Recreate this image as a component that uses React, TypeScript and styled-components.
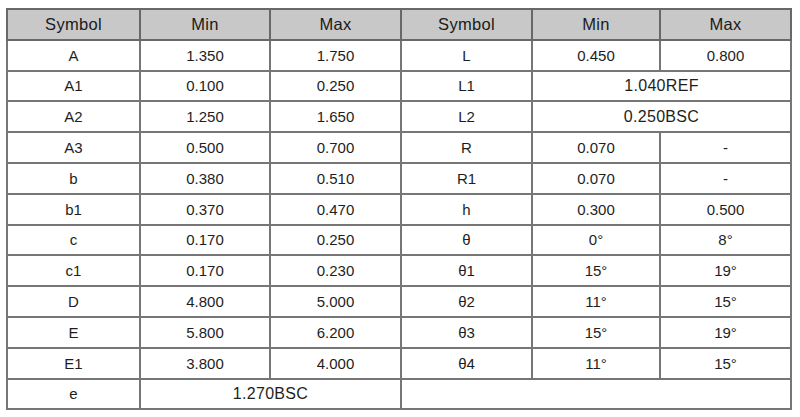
import React from "react";
import styled, { createGlobalStyle } from "styled-components";

const Global = createGlobalStyle`
  html, body { margin: 0; padding: 0; background: #ffffff; }
  body { font-family: "Liberation Sans", Arial, sans-serif; }
`;

const Page = styled.div`
  padding: 8px 10px 0 6px;
`;

const Table = styled.table`
  width: 784px;
  border-collapse: collapse;
  table-layout: fixed;
  font-family: "Liberation Sans", Arial, sans-serif;
  font-size: 15px;
  color: #1e1e1e;
  border: 2px solid #666;
`;

const Col = styled.col<{ $w: number }>`
  width: ${(p) => p.$w}px;
`;

const Row = styled.tr`
  height: 30.8px;
`;

const HeadCell = styled.th`
  background: #c8c8c8;
  font-weight: normal;
  font-size: 16.5px;
  letter-spacing: 0.3px;
  color: #1a1a1a;
  border: 2px solid #686868;
  text-align: center;
  padding: 0;
`;

const Cell = styled.td<{ $wide?: boolean }>`
  border: 2px solid #767676;
  text-align: center;
  padding: 0;
  background: #fff;
  font-size: ${(p) => (p.$wide ? "16px" : "15px")};
  letter-spacing: ${(p) => (p.$wide ? "0.3px" : "0")};
`;

type R = { t: string; span?: number }[];

const left: R[] = [
  [{ t: "A" }, { t: "1.350" }, { t: "1.750" }],
  [{ t: "A1" }, { t: "0.100" }, { t: "0.250" }],
  [{ t: "A2" }, { t: "1.250" }, { t: "1.650" }],
  [{ t: "A3" }, { t: "0.500" }, { t: "0.700" }],
  [{ t: "b" }, { t: "0.380" }, { t: "0.510" }],
  [{ t: "b1" }, { t: "0.370" }, { t: "0.470" }],
  [{ t: "c" }, { t: "0.170" }, { t: "0.250" }],
  [{ t: "c1" }, { t: "0.170" }, { t: "0.230" }],
  [{ t: "D" }, { t: "4.800" }, { t: "5.000" }],
  [{ t: "E" }, { t: "5.800" }, { t: "6.200" }],
  [{ t: "E1" }, { t: "3.800" }, { t: "4.000" }],
  [{ t: "e" }, { t: "1.270BSC", span: 2 }],
];

const right: R[] = [
  [{ t: "L" }, { t: "0.450" }, { t: "0.800" }],
  [{ t: "L1" }, { t: "1.040REF", span: 2 }],
  [{ t: "L2" }, { t: "0.250BSC", span: 2 }],
  [{ t: "R" }, { t: "0.070" }, { t: "-" }],
  [{ t: "R1" }, { t: "0.070" }, { t: "-" }],
  [{ t: "h" }, { t: "0.300" }, { t: "0.500" }],
  [{ t: "θ" }, { t: "0°" }, { t: "8°" }],
  [{ t: "θ1" }, { t: "15°" }, { t: "19°" }],
  [{ t: "θ2" }, { t: "11°" }, { t: "15°" }],
  [{ t: "θ3" }, { t: "15°" }, { t: "19°" }],
  [{ t: "θ4" }, { t: "11°" }, { t: "15°" }],
  [{ t: "", span: 3 }],
];

const widths = [133, 130, 131, 131, 128, 131];
const heads = ["Symbol", "Min", "Max", "Symbol", "Min", "Max"];

export default function App() {
  return (
    <Page>
      <Global />
      <Table>
        <colgroup>
          {widths.map((w, i) => (
            <Col key={i} $w={w} />
          ))}
        </colgroup>
        <thead>
          <Row>
            {heads.map((h, i) => (
              <HeadCell key={i}>{h}</HeadCell>
            ))}
          </Row>
        </thead>
        <tbody>
          {left.map((l, i) => (
            <Row key={i}>
              {[...l, ...right[i]].map((c, j) => (
                <Cell key={j} colSpan={c.span} $wide={!!c.span}>
                  {c.t}
                </Cell>
              ))}
            </Row>
          ))}
        </tbody>
      </Table>
    </Page>
  );
}
